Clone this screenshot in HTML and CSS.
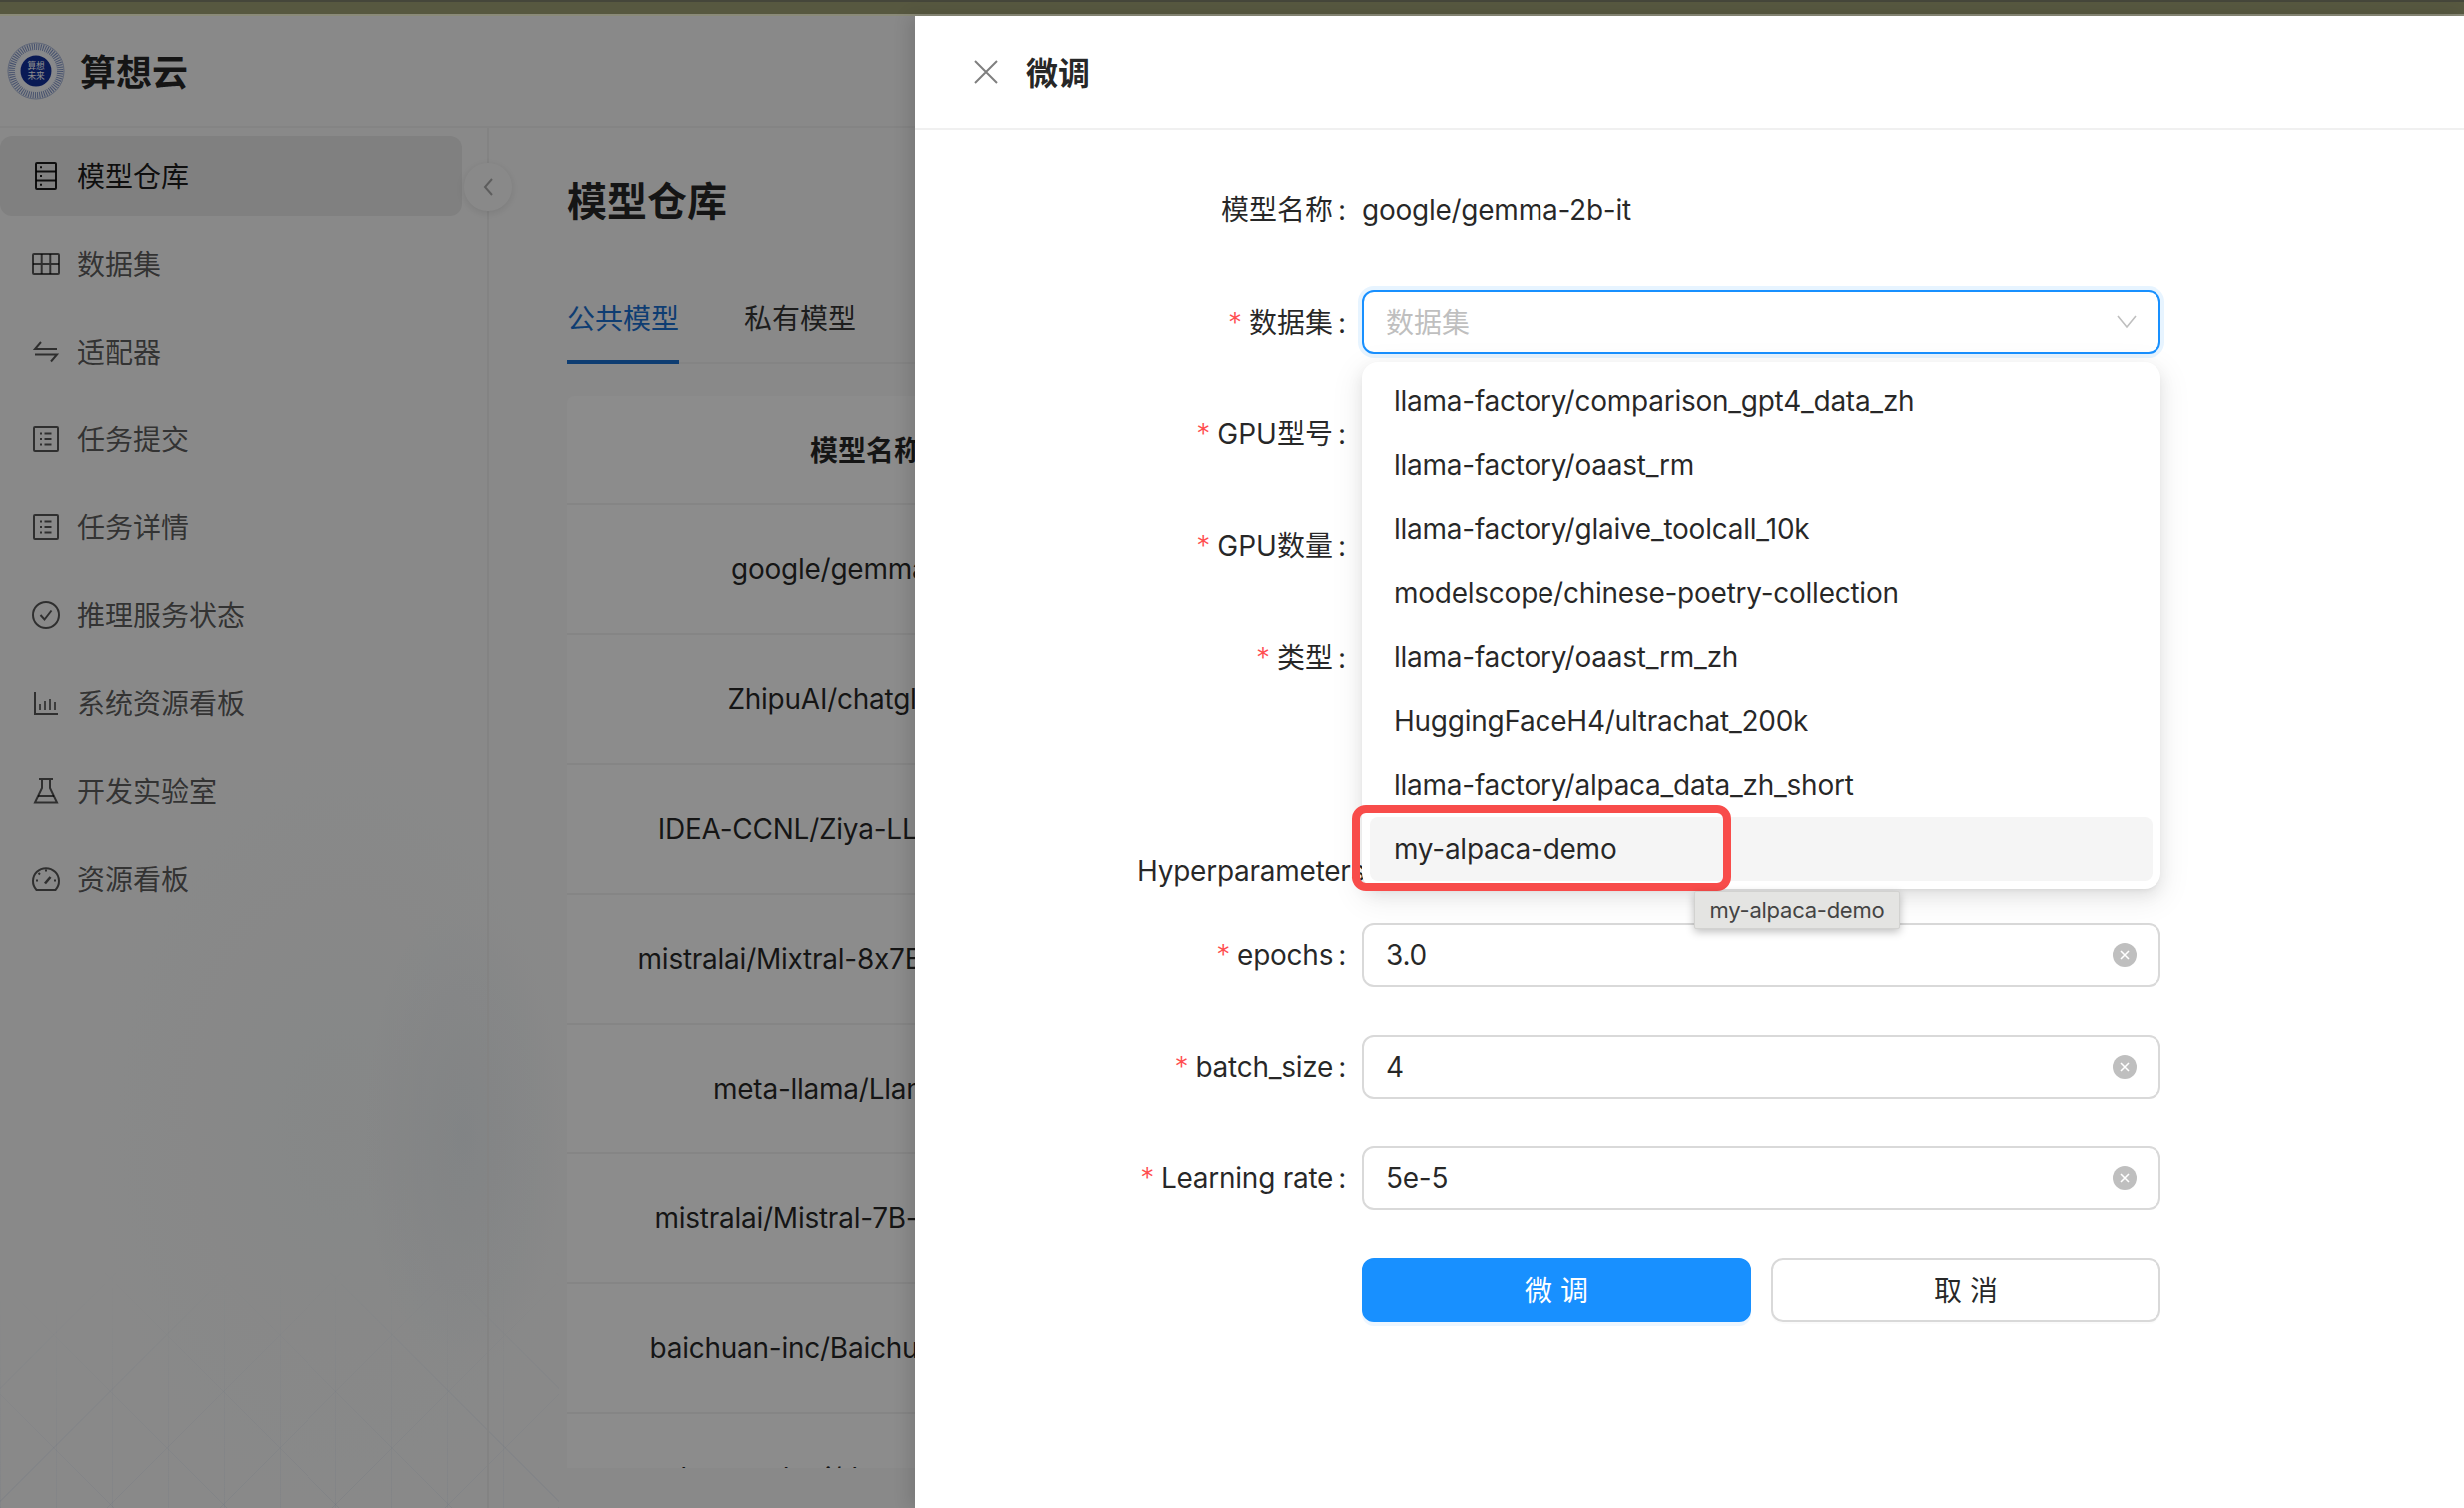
FILE: index.html
```html
<!DOCTYPE html>
<html lang="zh-CN">
<head>
  <meta charset="UTF-8">
  <title>算想云</title>
  <link rel="stylesheet" href="styles.css">
</head>
<body>
  <div class="top-band"></div>

  <div class="app">
    <header class="app-header">
      <svg class="logo" width="58" height="58" viewBox="0 0 60 60">
        <circle cx="30" cy="30" r="29" fill="#f5f7fc" stroke="#a9b6d8" stroke-width="1"/>
        <circle cx="30" cy="30" r="25" fill="none" stroke="#7f93c6" stroke-width="6.500" stroke-dasharray="1 1.300"/>
        <circle cx="30" cy="30" r="20" fill="#f8f9fd"/>
        <circle cx="30" cy="30" r="16" fill="#12309c"/>
        <text x="30" y="28" class="logo-text">算想</text>
        <text x="30" y="38" class="logo-text">未来</text>
      </svg>
      <span class="brand">算想云</span>
    </header>

    <div class="app-body">
      <div class="bg-pattern"></div>

      <nav class="sidebar">
        <a class="menu-item active">
          <svg class="menu-icon" viewBox="0 0 32 32" fill="none" stroke="currentColor" stroke-width="2">
            <rect x="6" y="3" width="20" height="26" rx="1"/>
            <path d="M6 11.500h20M6 20.500h20"/>
            <path d="M10 7.200h2M10 16h2M10 24.800h2"/>
          </svg>
          <span>模型仓库</span>
        </a>
        <a class="menu-item">
          <svg class="menu-icon" viewBox="0 0 32 32" fill="none" stroke="currentColor" stroke-width="2">
            <rect x="3" y="6" width="26" height="20" rx="1"/>
            <path d="M3 16h26M11.700 6v20M20.300 6v20"/>
          </svg>
          <span>数据集</span>
        </a>
        <a class="menu-item">
          <svg class="menu-icon" viewBox="0 0 32 32" fill="none" stroke="currentColor" stroke-width="2">
            <path d="M27 13H5l6-7"/>
            <path d="M5 18.500h22l-6 7"/>
          </svg>
          <span>适配器</span>
        </a>
        <a class="menu-item">
          <svg class="menu-icon" viewBox="0 0 32 32" fill="none" stroke="currentColor" stroke-width="2">
            <rect x="4" y="4" width="24" height="24" rx="1"/>
            <path d="M10 10.500h2M10 16h2M10 21.500h2M14.500 10.500h7M14.500 16h7M14.500 21.500h7"/>
          </svg>
          <span>任务提交</span>
        </a>
        <a class="menu-item">
          <svg class="menu-icon" viewBox="0 0 32 32" fill="none" stroke="currentColor" stroke-width="2">
            <rect x="4" y="4" width="24" height="24" rx="1"/>
            <path d="M10 10.500h2M10 16h2M10 21.500h2M14.500 10.500h7M14.500 16h7M14.500 21.500h7"/>
          </svg>
          <span>任务详情</span>
        </a>
        <a class="menu-item">
          <svg class="menu-icon" viewBox="0 0 32 32" fill="none" stroke="currentColor" stroke-width="2">
            <circle cx="16" cy="16" r="13"/>
            <path d="M10.500 16l4 4.500 7-9"/>
          </svg>
          <span>推理服务状态</span>
        </a>
        <a class="menu-item">
          <svg class="menu-icon" viewBox="0 0 32 32" fill="none" stroke="currentColor" stroke-width="2">
            <path d="M5 5v22h23"/>
            <path d="M10 23v-6M15 23v-9M20 23v-11M25 23v-8" stroke-width="1.700"/>
          </svg>
          <span>系统资源看板</span>
        </a>
        <a class="menu-item">
          <svg class="menu-icon" viewBox="0 0 32 32" fill="none" stroke="currentColor" stroke-width="2">
            <path d="M9 4h14M12 4v9L5 27.500h22L20 13V4"/>
            <path d="M8 21h16"/>
          </svg>
          <span>开发实验室</span>
        </a>
        <a class="menu-item">
          <svg class="menu-icon" viewBox="0 0 32 32" fill="none" stroke="currentColor" stroke-width="2">
            <path d="M6.500 27A13 13 0 1 1 25.500 27z"/>
            <path d="M15 20.500l5.500-6.500" stroke-width="2.600"/>
            <path d="M16 6.500v2M8.500 10l1.500 1.500M6 17.500h2M24 17.500h2"/>
          </svg>
          <span>资源看板</span>
        </a>
      </nav>

      <button class="collapse-btn">
        <svg width="12" height="20" viewBox="0 0 12 20" fill="none" stroke="currentColor" stroke-width="2"><path d="M10 2L3 10l7 8"/></svg>
      </button>

      <main class="main">
        <h1 class="page-title">模型仓库</h1>
        <div class="tabs">
          <div class="tab active">公共模型</div>
          <div class="tab">私有模型</div>
        </div>
        <div class="table-wrap">
          <table class="model-table">
            <thead>
              <tr><th>模型名称</th><th></th></tr>
            </thead>
            <tbody>
              <tr><td>google/gemma-2b-it</td><td></td></tr>
              <tr><td>ZhipuAI/chatglm3-6b</td><td></td></tr>
              <tr><td>IDEA-CCNL/Ziya-LLaMA-13B-v1</td><td></td></tr>
              <tr><td>mistralai/Mixtral-8x7B-Instruct-v0.1</td><td></td></tr>
              <tr><td>meta-llama/Llama-2-7b</td><td></td></tr>
              <tr><td>mistralai/Mistral-7B-Instruct-v0.1</td><td></td></tr>
              <tr><td>baichuan-inc/Baichuan-13B-Chat</td><td></td></tr>
              <tr><td>deepseek-ai/deepseek-llm-7b</td><td></td></tr>
            </tbody>
          </table>
        </div>
      </main>
    </div>
  </div>

  <div class="mask"></div>

  <aside class="drawer">
    <div class="drawer-header">
      <svg class="drawer-close" width="26" height="26" viewBox="0 0 26 26" fill="none" stroke="currentColor" stroke-width="2"><path d="M2 2l22 22M24 2L2 24"/></svg>
      <span class="drawer-title">微调</span>
    </div>

    <form class="form">
      <div class="form-row">
        <label class="form-label plain">模型名称</label>
        <div class="form-text">google/gemma-2b-it</div>
      </div>

      <div class="form-row">
        <label class="form-label cjk"><span class="req">*</span>数据集</label>
        <div class="control">
          <div class="input focused">
            <span class="placeholder">数据集</span>
            <svg class="chevron" width="22" height="15" viewBox="0 0 22 15" fill="none" stroke="currentColor" stroke-width="1.600"><path d="M2 2l9 11 9-11"/></svg>
          </div>
          <ul class="dropdown">
            <li class="option">llama-factory/comparison_gpt4_data_zh</li>
            <li class="option">llama-factory/oaast_rm</li>
            <li class="option">llama-factory/glaive_toolcall_10k</li>
            <li class="option">modelscope/chinese-poetry-collection</li>
            <li class="option">llama-factory/oaast_rm_zh</li>
            <li class="option">HuggingFaceH4/ultrachat_200k</li>
            <li class="option">llama-factory/alpaca_data_zh_short</li>
            <li class="option hover">my-alpaca-demo</li>
            <li class="highlight-box"></li>
            <li class="native-tip">my-alpaca-demo</li>
          </ul>
        </div>
      </div>

      <div class="form-row">
        <label class="form-label cjk"><span class="req">*</span>GPU型号</label>
        <div class="control"><div class="input"></div></div>
      </div>

      <div class="form-row">
        <label class="form-label cjk"><span class="req">*</span>GPU数量</label>
        <div class="control"><div class="input"></div></div>
      </div>

      <div class="form-row type-row">
        <label class="form-label cjk"><span class="req">*</span>类型</label>
        <div class="control"></div>
      </div>

      <div class="section-label">Hyperparameters</div>

      <div class="form-row">
        <label class="form-label"><span class="req">*</span>epochs</label>
        <div class="control">
          <div class="input">3.0<span class="clear"><svg width="12" height="12" viewBox="0 0 12 12" fill="none" stroke="#fff" stroke-width="1.600"><path d="M2 2l8 8M10 2l-8 8"/></svg></span></div>
        </div>
      </div>

      <div class="form-row">
        <label class="form-label"><span class="req">*</span>batch_size</label>
        <div class="control">
          <div class="input">4<span class="clear"><svg width="12" height="12" viewBox="0 0 12 12" fill="none" stroke="#fff" stroke-width="1.600"><path d="M2 2l8 8M10 2l-8 8"/></svg></span></div>
        </div>
      </div>

      <div class="form-row">
        <label class="form-label"><span class="req">*</span>Learning rate</label>
        <div class="control">
          <div class="input">5e-5<span class="clear"><svg width="12" height="12" viewBox="0 0 12 12" fill="none" stroke="#fff" stroke-width="1.600"><path d="M2 2l8 8M10 2l-8 8"/></svg></span></div>
        </div>
      </div>

      <div class="form-actions">
        <button type="button" class="btn btn-primary">微 调</button>
        <button type="button" class="btn">取 消</button>
      </div>
    </form>
  </aside>
</body>
</html>
```

FILE: styles.css
```css
* {
  margin: 0;
  padding: 0;
  box-sizing: border-box;
}

html, body {
  width: 2468px;
  height: 1510px;
  overflow: hidden;
}

body {
  position: relative;
  font-family: "Inter", "Noto Sans CJK SC", sans-serif;
  font-size: 28px;
  letter-spacing: -.25px;
  color: rgba(0,0,0,.85);
  background: #fff;
}

.top-band {
  height: 16px;
  background: #575840;
  border-top: 2px solid #45463a;
  border-bottom: 2px solid #8a8a78;
}

/* Page behind the drawer */
.app {
  height: 1494px;
  display: flex;
  flex-direction: column;
  background: #fafafa;
}

.app-header {
  height: 112px;
  display: flex;
  align-items: center;
  gap: 15px;
  padding-left: 7px;
  border-bottom: 2px solid #f0f0f0;
  flex-shrink: 0;
}

.logo-text {
  font-size: 9px;
  fill: #fff;
  text-anchor: middle;
}

.brand {
  padding-bottom: 2px;
  font-size: 36px;
  font-weight: 600;
  letter-spacing: 0;
}

.app-body {
  position: relative;
  flex: 1;
  display: flex;
  background:
    radial-gradient(ellipse 100px 240px at 465px 1010px, rgba(130,165,195,.09), transparent),
    radial-gradient(ellipse 300px 460px at 340px 1000px, rgba(150,185,185,.06), transparent);
}

.bg-pattern {
  position: absolute;
  left: 0;
  bottom: 0;
  width: 560px;
  height: 240px;
  background:
    repeating-linear-gradient(45deg, rgba(110,150,210,.09) 0 1px, transparent 1px 80px),
    repeating-linear-gradient(-45deg, rgba(110,150,210,.09) 0 1px, transparent 1px 80px),
    repeating-linear-gradient(90deg, rgba(110,150,210,.07) 0 1px, transparent 1px 56px);
  -webkit-mask-image: linear-gradient(to top, #000, transparent);
  mask-image: linear-gradient(to top, #000, transparent);
}

.sidebar {
  position: relative;
  width: 490px;
  flex-shrink: 0;
  padding: 8px 25px 0 0;
  border-right: 2px solid #eee;
}

.menu-item {
  display: flex;
  align-items: center;
  gap: 15px;
  height: 80px;
  margin-bottom: 8px;
  padding-left: 30px;
  border-radius: 12px;
  letter-spacing: 0;
  color: rgba(0,0,0,.65);
}

.menu-item span {
  padding-bottom: 2px;
}

.menu-item.active {
  background: #e9e9e9;
  color: rgba(0,0,0,.88);
}

.menu-icon {
  width: 32px;
  height: 32px;
  flex-shrink: 0;
}

.collapse-btn {
  position: absolute;
  left: 465px;
  top: 35px;
  width: 48px;
  height: 48px;
  display: flex;
  align-items: center;
  justify-content: center;
  border: none;
  border-radius: 50%;
  background: #fafafa;
  color: #aaa;
  box-shadow: 0 2px 8px rgba(0,0,0,.1);
}

.main {
  flex: 1;
  padding: 44px 0 0 78px;
  min-width: 0;
}

.page-title {
  padding-top: 2px;
  height: 56px;
  font-size: 40px;
  line-height: 56px;
  font-weight: 600;
  letter-spacing: 0;
}

.tabs {
  display: flex;
  gap: 65px;
  margin-top: 70px;
  border-bottom: 2px solid #f0f0f0;
  height: 66px;
  letter-spacing: 0;
}

.tab {
  line-height: 42px;
  height: 66px;
  color: rgba(0,0,0,.8);
}

.tab.active {
  color: #1a6fd0;
  border-bottom: 4px solid #1a6fd0;
}

.table-wrap {
  margin-top: 33px;
  height: 1073px;
  overflow: hidden;
  background: #fff;
  border-radius: 8px 0 0 0;
}

.model-table {
  width: 100%;
  border-collapse: collapse;
  table-layout: fixed;
}

.model-table th,
.model-table td {
  text-align: center;
  font-weight: 400;
  white-space: nowrap;
  border-bottom: 2px solid #f2f2f2;
}

.model-table th:first-child,
.model-table td:first-child {
  width: 598px;
}

.model-table th {
  height: 108px;
  padding-bottom: 2px;
  font-weight: 600;
  letter-spacing: 0;
}

.model-table td {
  height: 130px;
}

/* Overlay */
.mask {
  position: absolute;
  left: 0;
  top: 16px;
  right: 0;
  bottom: 0;
  background: rgba(0,0,0,.45);
}

.drawer {
  position: absolute;
  right: 0;
  top: 16px;
  bottom: 0;
  width: 1552px;
  background: #fff;
  box-shadow: -6px 0 16px rgba(0,0,0,.12);
}

.drawer-header {
  display: flex;
  align-items: center;
  height: 114px;
  padding-left: 59px;
  border-bottom: 2px solid #f0f0f0;
}

.drawer-close {
  color: #7f7f7f;
}

.drawer-title {
  margin-left: 27px;
  padding-bottom: 2px;
  font-size: 32px;
  font-weight: 600;
  letter-spacing: 0;
}

.form {
  padding: 48px 304px 0 0;
}

.form-row {
  display: grid;
  grid-template-columns: 448px 1fr;
  height: 64px;
  margin-bottom: 48px;
  line-height: 64px;
}

.type-row {
  margin-bottom: 150px;
}

.form-label {
  text-align: right;
  padding-right: 16px;
  white-space: nowrap;
}

.form-label.cjk {
  line-height: 66px;
  letter-spacing: 0;
}

.form-label.plain {
  letter-spacing: 0;
}

.form-label::after {
  content: ":";
  margin-left: 5px;
}

.req {
  margin-right: 7px;
  font-weight: 300;
  color: #ff4d4f;
}

.section-label {
  height: 64px;
  line-height: 64px;
  margin-bottom: 20px;
  padding-left: 223px;
  white-space: nowrap;
}

.control {
  position: relative;
}

.input {
  position: relative;
  height: 64px;
  line-height: 60px;
  padding: 0 22px;
  border: 2px solid #d9d9d9;
  border-radius: 12px;
  background: #fff;
}

.input.focused {
  line-height: 62px;
  border-color: #1890ff;
  box-shadow: 0 0 0 4px rgba(24,144,255,.1);
}

.placeholder {
  letter-spacing: 0;
  color: #bfbfbf;
}

.chevron {
  position: absolute;
  right: 21px;
  top: 22px;
  color: #bfbfbf;
}

.clear {
  position: absolute;
  right: 22px;
  top: 18px;
  width: 24px;
  height: 24px;
  display: flex;
  align-items: center;
  justify-content: center;
  border-radius: 50%;
  background: #bfbfbf;
}

.dropdown {
  position: absolute;
  left: 0;
  right: 0;
  top: 72px;
  height: 528px;
  padding: 8px;
  list-style: none;
  background: #fff;
  border-radius: 16px;
  box-shadow: 0 6px 16px 0 rgba(0,0,0,.08), 0 3px 6px -4px rgba(0,0,0,.12), 0 9px 28px 8px rgba(0,0,0,.05);
  z-index: 2;
}

.option {
  height: 64px;
  line-height: 64px;
  padding-left: 24px;
  border-radius: 8px;
  white-space: nowrap;
}

.option.hover {
  background: #f5f5f5;
}

.highlight-box {
  position: absolute;
  left: -10px;
  top: 444px;
  width: 380px;
  height: 86px;
  border: 8px solid #f84c4a;
  border-radius: 14px;
}

.native-tip {
  position: absolute;
  left: 333px;
  top: 530px;
  width: 206px;
  height: 38px;
  line-height: 36px;
  text-align: center;
  font-size: 22px;
  color: #444;
  background: #e4e4e2;
  border: 1px solid #d2d2d0;
  border-radius: 2px;
  box-shadow: 0 3px 8px rgba(0,0,0,.25);
}

.form-actions {
  display: flex;
  gap: 20px;
  margin-left: 448px;
}

.btn {
  flex: 1;
  height: 64px;
  padding-bottom: 2px;
  font: inherit;
  letter-spacing: 0;
  color: rgba(0,0,0,.85);
  background: #fff;
  border: 2px solid #d9d9d9;
  border-radius: 12px;
  box-shadow: 0 2px 0 rgba(0,0,0,.015);
}

.btn-primary {
  color: #fff;
  background: #1890ff;
  border-color: #1890ff;
  box-shadow: 0 4px 0 rgba(24,144,255,.08);
}
```
